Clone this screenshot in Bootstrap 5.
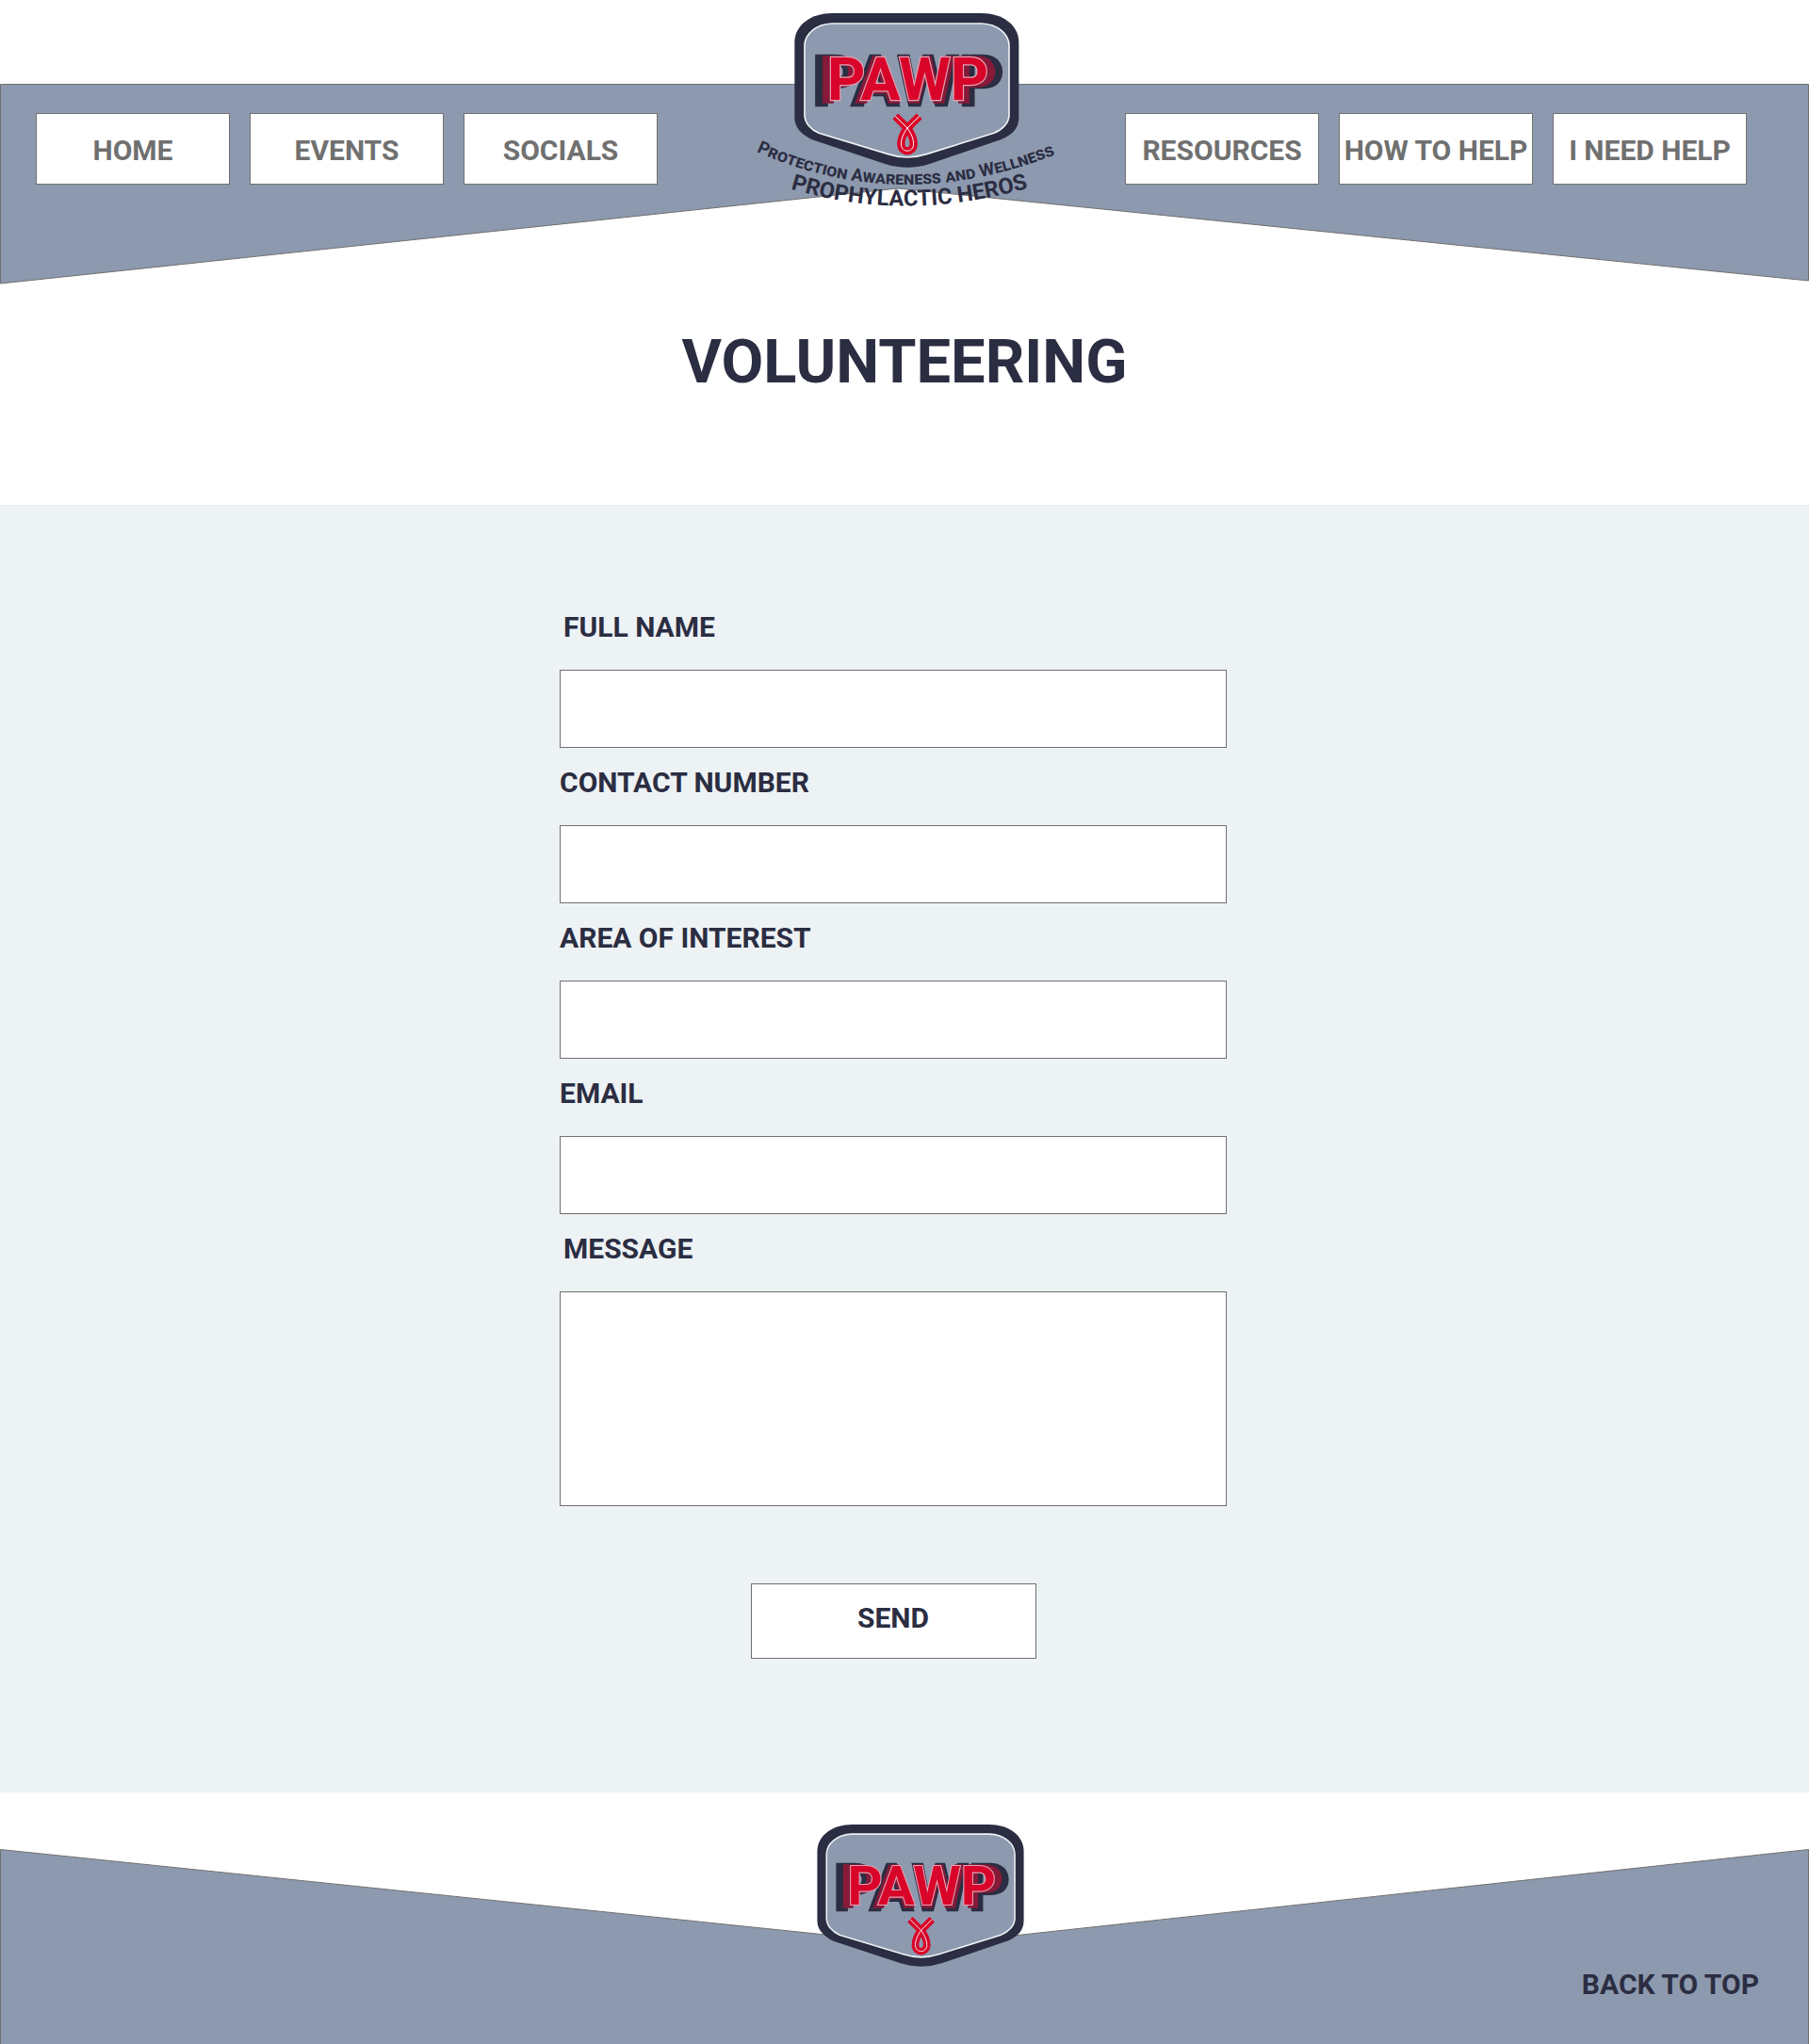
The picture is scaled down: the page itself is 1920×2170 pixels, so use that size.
<!DOCTYPE html>
<html lang="en">
<head>
<meta charset="utf-8">
<meta name="viewport" content="width=device-width, initial-scale=1">
<title>PAWP – Volunteering</title>
<link href="https://cdn.jsdelivr.net/npm/bootstrap@5.3.0/dist/css/bootstrap.min.css" rel="stylesheet">
<style>
  :root { --ink: #2b2d42; --slate: #8d99ae; --mist: #edf2f4; --line: #707070; --brand: #d90429; }
  body { font-family: Roboto, "Liberation Sans", sans-serif; color: var(--ink); background: #fff; }
  .band-shape { position: absolute; inset: 0; width: 100%; height: 100%; z-index: -1; }
  .band-shape polygon { fill: var(--slate); stroke: var(--line); stroke-width: 1; vector-effect: non-scaling-stroke; }
  .site-header { display: grid; grid-template-columns: 1fr auto 1fr; isolation: isolate; height: 302px; }
  .nav-side { gap: 21px; padding-top: 120px; }
  .nav-left { padding-left: 38px; }
  .nav-right { padding-right: 66px; }
  .nav-box { width: 206px; height: 76px; padding: 4px 0 0; white-space: nowrap; }
  .nav-box, .nav-box:hover { color: var(--line); background: #fff; }
  .nav-box, .send-btn, .field { border: 1px solid var(--line); border-radius: 0; }
  .text-ui { font-size: 30px; line-height: 36px; font-weight: 700; }
  .page-title { font-size: 65px; line-height: 80px; font-weight: 700; padding: 42px 0 112px; }
  .form-area { background: var(--mist); padding: 112px 24px 142px 0; }
  .volunteer-form { width: 708px; max-width: 100%; }
  .field-label { margin-bottom: 27px; }
  .field { height: 83px; font-size: 24px; }
  .field-group { margin-bottom: 19px; }
  .field-tall { height: 228px; resize: none; }
  .send-btn { width: 303px; height: 80px; padding: 0 0 6px; margin-top: 63px; background: #fff; color: var(--ink); }
  .site-footer { isolation: isolate; padding: 34px 53px 45px; height: 267px; }
  .footer-band { inset: 60px 0 0; height: 207px; }
  .footer-logo { padding-left: 34px; }
  .top-link { color: var(--ink); }
  .logo-word { font-family: Roboto, sans-serif; font-weight: 700; text-anchor: middle; paint-order: stroke; }
  .logo-arc { font-family: Roboto, sans-serif; font-weight: 700; fill: var(--ink); }
</style>
</head>
<body id="top">

<header class="site-header position-relative">
  <svg class="band-shape" viewBox="0 0 1920 302" preserveAspectRatio="none" aria-hidden="true">
    <polygon points="0.5,89.5 1919.5,89.5 1919.5,298 953,200 0.5,301"/>
  </svg>
  <nav class="nav-side nav-left d-flex align-items-start" aria-label="Main">
    <a class="btn nav-box text-ui d-flex align-items-center justify-content-center" href="#home">HOME</a>
    <a class="btn nav-box text-ui d-flex align-items-center justify-content-center" href="#events">EVENTS</a>
    <a class="btn nav-box text-ui d-flex align-items-center justify-content-center" href="#socials">SOCIALS</a>
  </nav>
  <svg width="360" height="240" viewBox="0 0 1080 720" role="img" aria-label="PAWP logo">
    <g id="badge-art">
      <path fill="#2b2d42" d="M310 42H785C850 42 904 78 904 135V375C904 412 878 432 846 445L620 522Q549 545 478 522L246 445C215 430 190 408 190 375V135C190 78 245 42 310 42Z"/>
      <path fill="#8d99ae" stroke="#edf2f4" stroke-width="5" d="M310 75H785C837 77 873 108 873 145V366C873 392 852 413 825 424L610 491Q549 511 488 491L267 424C242 413 222 392 222 366V145C222 108 258 77 310 75Z"/>
      <g class="logo-word">
        <text x="551" y="337" font-size="224" stroke="#2b2d42" stroke-width="8" fill="#2b2d42">PAWP</text>
        <text x="551" y="328" font-size="207" stroke="#861a38" stroke-width="5" fill="#861a38">PAWP</text>
        <text x="551" y="318" font-size="188" stroke="#e3a3b3" stroke-width="7" fill="#d90429">PAWP</text>
      </g>
      <g fill="none">
        <path stroke="#d90429" stroke-width="25" d="M511 370L549 408C562 425 569 445 569 458C569 488 529 488 529 458C529 445 536 425 549 408L587 370"/>
        <path stroke="#fff" stroke-width="3" d="M511 370L549 408C562 425 569 445 569 458C569 488 529 488 529 458C529 445 536 425 549 408L587 370"/>
      </g>
    </g>
    <path id="arc-motto" fill="none" d="M68 483Q541 694 1050 480"/>
    <path id="arc-heros" fill="none" d="M177 601Q550 715 960 591"/>
    <g class="logo-arc">
      <text font-size="56" font-variant="small-caps"><textPath href="#arc-motto">Protection Awareness and Wellness</textPath></text>
      <text font-size="71"><textPath href="#arc-heros">PROPHYLACTIC HEROS</textPath></text>
    </g>
  </svg>
  <nav class="nav-side nav-right d-flex align-items-start justify-content-end" aria-label="Support">
    <a class="btn nav-box text-ui d-flex align-items-center justify-content-center" href="#resources">RESOURCES</a>
    <a class="btn nav-box text-ui d-flex align-items-center justify-content-center" href="#how">HOW TO HELP</a>
    <a class="btn nav-box text-ui d-flex align-items-center justify-content-center" href="#need">I NEED HELP</a>
  </nav>
</header>

<main>
  <h1 class="page-title text-center m-0">VOLUNTEERING</h1>
  <section class="form-area">
    <form class="volunteer-form mx-auto">
      <div class="field-group">
        <label class="field-label text-ui d-block ps-1" for="fullName">FULL NAME</label>
        <input class="form-control field" type="text" id="fullName">
      </div>
      <div class="field-group">
        <label class="field-label text-ui d-block" for="contact">CONTACT NUMBER</label>
        <input class="form-control field" type="tel" id="contact">
      </div>
      <div class="field-group">
        <label class="field-label text-ui d-block" for="area">AREA OF INTEREST</label>
        <input class="form-control field" type="text" id="area">
      </div>
      <div class="field-group">
        <label class="field-label text-ui d-block" for="email">EMAIL</label>
        <input class="form-control field" type="email" id="email">
      </div>
      <div class="field-group">
        <label class="field-label text-ui d-block ps-1" for="message">MESSAGE</label>
        <textarea class="form-control field field-tall" id="message"></textarea>
      </div>
      <div class="text-center">
        <button class="btn send-btn text-ui" type="submit">SEND</button>
      </div>
    </form>
  </section>
</main>

<footer class="site-footer position-relative d-flex flex-column justify-content-between">
  <svg class="band-shape footer-band" viewBox="0 0 1920 207" preserveAspectRatio="none" aria-hidden="true">
    <polygon points="0.5,0.5 983,102 1919.5,0.5 1919.5,208 0.5,208"/>
  </svg>
  <div class="footer-logo text-center">
    <svg width="220" height="151" viewBox="190 42 714 492" role="img" aria-label="PAWP logo"><use href="#badge-art"/></svg>
  </div>
  <a class="top-link text-ui text-decoration-none align-self-end" href="#top">BACK TO TOP</a>
</footer>

<script src="https://cdn.jsdelivr.net/npm/bootstrap@5.3.0/dist/js/bootstrap.bundle.min.js"></script>
</body>
</html>
